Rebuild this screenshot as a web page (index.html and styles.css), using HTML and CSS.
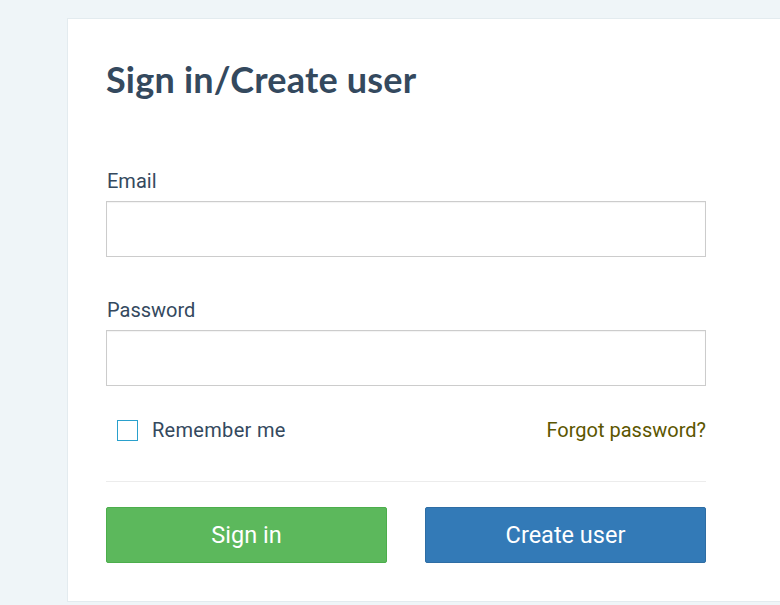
FILE: index.html
```html
<!DOCTYPE html>
<html>
<head>
<meta charset="utf-8">
<link rel="stylesheet" href="styles.css">
</head>
<body>
<div class="page">
  <div class="card">
    <h1 class="title">Sign in/Create user</h1>
    <form class="form">
      <label class="label">Email</label>
      <input class="input" type="text">
      <label class="label label-pw">Password</label>
      <input class="input" type="password">
      <div class="options">
        <label class="remember"><span class="checkbox"></span><span>Remember me</span></label>
        <a class="forgot" href="#">Forgot password?</a>
      </div>
      <div class="divider"></div>
      <div class="buttons">
        <button type="button" class="btn btn-green">Sign in</button>
        <button type="button" class="btn btn-blue">Create user</button>
      </div>
    </form>
  </div>
</div>
</body>
</html>
```

FILE: styles.css
```css
html, body {
  margin: 0;
  padding: 0;
  background: #eff5f8;
  overflow: hidden;
  height: 605px;
}
.page {
  padding: 18px 0 0 67px;
}
.card {
  width: 740px;
  background: #fff;
  border: 1px solid #e3ebef;
  padding: 38px 0 38px 38px;
  box-sizing: border-box;
}
.title {
  margin: 0;
  font-family: "Lato", "DejaVu Sans", sans-serif;
  font-weight: 700;
  font-size: 36px;
  line-height: 44px;
  color: #34495e;
  letter-spacing: 0.2px;
}
.form {
  width: 600px;
  display: flex;
  flex-direction: column;
  margin-top: 69px;
  font-family: "Roboto", "Liberation Sans", sans-serif;
}
.label {
  font-size: 20px;
  line-height: 22px;
  color: #34495e;
  padding-left: 1px;
  margin-bottom: 9px;
}
.label-pw {
  margin-top: 42px;
}
.input {
  height: 56px;
  box-sizing: border-box;
  border: 1px solid #cccccc;
  margin: 0;
  padding: 0 12px;
  box-shadow: inset 0 1px 1px rgba(0,0,0,0.05);
  font-size: 18px;
}
.options {
  display: flex;
  justify-content: space-between;
  align-items: center;
  margin-top: 32px;
  height: 24px;
  font-size: 20px;
}
.remember {
  display: flex;
  align-items: center;
  color: #34495e;
  padding-left: 11px;
  letter-spacing: 0.3px;
}
.checkbox {
  width: 21px;
  height: 21px;
  box-sizing: border-box;
  border: 1px solid #2aa0cc;
  margin-right: 14px;
}
.forgot {
  color: #5c5600;
  text-decoration: none;
}
.divider {
  height: 1px;
  background: #ececec;
  margin-top: 39px;
}
.buttons {
  display: flex;
  justify-content: space-between;
  margin-top: 25px;
}
.btn {
  width: 281px;
  height: 56px;
  border-radius: 2px;
  font-family: "Roboto", "Liberation Sans", sans-serif;
  font-size: 23.5px;
  color: #fff;
  cursor: pointer;
}
.btn-green {
  background: #5cb85c;
  border: 1px solid #4cae4c;
}
.btn-blue {
  background: #337ab7;
  border: 1px solid #2e6da4;
}
```
